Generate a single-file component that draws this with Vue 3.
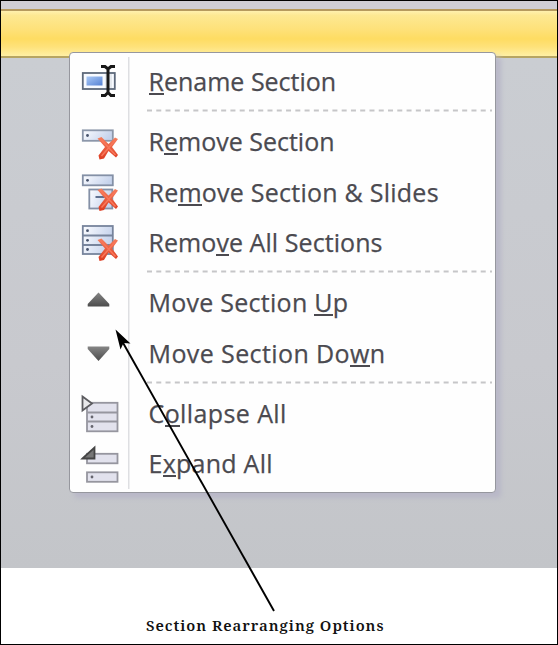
<script setup>
const groups = [
  [{ icon: 'rename', pre: '', key: 'R', post: 'ename Section', cls: 'w1' }],
  [
    { icon: 'remove', pre: 'R', key: 'e', post: 'move Section', cls: 'w2' },
    { icon: 'removeSlides', pre: 'Re', key: 'm', post: 'ove Section & Slides', cls: 'w3' },
    { icon: 'removeAll', pre: 'Remo', key: 'v', post: 'e All Sections', cls: 'w4' },
  ],
  [
    { icon: 'up', pre: 'Move Section ', key: 'U', post: 'p', cls: 'w5' },
    { icon: 'down', pre: 'Move Section Do', key: 'w', post: 'n', cls: 'w6' },
  ],
  [
    { icon: 'collapse', pre: 'C', key: 'o', post: 'llapse All', cls: 'w7' },
    { icon: 'expand', pre: 'E', key: 'x', post: 'pand All', cls: 'w8' },
  ],
]
</script>

<template>
  <div class="frame">
    <svg class="defs" width="0" height="0">
      <defs>
        <linearGradient id="bar" x1="0" y1="0" x2="1" y2="0.3">
          <stop offset="0" stop-color="#fbfcff" />
          <stop offset="1" stop-color="#c6d3ec" />
        </linearGradient>
        <linearGradient id="blue" x1="0" y1="0" x2="1" y2="1">
          <stop offset="0" stop-color="#a9c9f7" />
          <stop offset="1" stop-color="#5581d3" />
        </linearGradient>
        <linearGradient id="dark" x1="0" y1="0" x2="0" y2="1">
          <stop offset="0" stop-color="#858585" />
          <stop offset="1" stop-color="#4c4c4c" />
        </linearGradient>
        <linearGradient id="red" x1="0" y1="0" x2="0" y2="1">
          <stop offset="0" stop-color="#f4805f" />
          <stop offset="1" stop-color="#dd3a1f" />
        </linearGradient>
        <g id="cross">
          <path d="M0 1.500 4 0 11 7 17.500 .5 20.500 2 14.500 10 20.500 18 18.500 20.500 11 14 6.500 21.500 2 22.500 1 18.500 7.500 10Z" fill="url(#red)" />
          <path d="M3 2 18 18M18 3 4 19" stroke="#f8775b" stroke-width="1.500" fill="none" />
        </g>
      </defs>
    </svg>
    <div class="canvas">
      <div class="ribbon"></div>
      <div class="surface"></div>
    </div>
    <div class="caption">Section Rearranging Options</div>

    <div class="menu">
      <template v-for="(group, g) in groups" :key="g">
        <div v-if="g" class="separator">
          <svg width="346" height="3"><path d="M0 1.500H345" stroke="#c6c6c8" stroke-width="1.800" stroke-dasharray="5 4.270" /></svg>
        </div>
        <div v-for="item in group" :key="item.icon" class="item">
          <svg class="icon" width="60" height="50" viewBox="0 0 60 50">
            <g v-if="item.icon === 'rename'">
              <rect x="12.800" y="16" width="32" height="16" fill="#f7faff" stroke="#5d697b" stroke-width="1.800" />
              <rect x="16.500" y="19.500" width="16" height="9" fill="url(#blue)" />
              <rect x="35" y="17" width="7" height="14" fill="#e5e9ee" />
              <path d="M31 9.500h4l3 2.500 3-2.500H45M38 11V36M31 38.500h4l3-3 3 3H45" fill="none" stroke="#181818" stroke-width="3" />
            </g>
            <g v-else-if="item.icon === 'remove'">
              <rect x="12.800" y="13.300" width="30" height="10.500" fill="url(#bar)" stroke="#8c97aa" stroke-width="1.800" />
              <circle cx="17.500" cy="18.500" r="1.400" fill="#47536b" />
              <use href="#cross" x="27.500" y="20" />
            </g>
            <g v-else-if="item.icon === 'removeSlides'">
              <rect x="12.800" y="7.300" width="30" height="10" fill="url(#bar)" stroke="#8490a6" stroke-width="1.800" />
              <circle cx="17.500" cy="12.300" r="1.400" fill="#47536b" />
              <rect x="19.300" y="21.500" width="23" height="19" fill="url(#bar)" stroke="#8490a6" stroke-width="1.800" />
              <path d="M25.500 29h9" stroke="#5f7090" stroke-width="2" />
              <use href="#cross" x="27.500" y="20.500" />
            </g>
            <g v-else-if="item.icon === 'removeAll'">
              <rect x="12.800" y="8" width="30" height="28" fill="url(#bar)" stroke="#77849c" stroke-width="1.800" />
              <path d="M13 17.500h30M13 27h30" stroke="#77849c" stroke-width="1.800" />
              <g fill="#47536b"><circle cx="17.500" cy="12.700" r="1.400" /><circle cx="17.500" cy="22.300" r="1.400" /><circle cx="17.500" cy="31.500" r="1.400" /></g>
              <use href="#cross" x="27.500" y="20.500" />
            </g>
            <path v-else-if="item.icon === 'up'" d="M28.500 14.500 39.300 26v2.500H17.700V26Z" fill="url(#dark)" />
            <path v-else-if="item.icon === 'down'" d="M17.700 17.500h21.600V20L28.500 32 17.700 20Z" fill="url(#dark)" />
            <g v-else-if="item.icon === 'collapse'">
              <rect x="17" y="13.800" width="30.500" height="28.500" fill="#e2e2ed" stroke="#96969f" stroke-width="1.800" />
              <path d="M17.500 23.500h30M17.500 32.500h30" stroke="#96969f" stroke-width="1.800" />
              <g fill="#66666f"><circle cx="22" cy="28" r="1.400" /><circle cx="22" cy="37.500" r="1.400" /></g>
              <path d="M12.500 7.500 22 14.500 12.500 21.500Z" fill="#e9e9eb" stroke="#5c5c60" stroke-width="1.800" />
            </g>
            <g v-else>
              <rect x="17" y="14.800" width="30.500" height="9.500" fill="#e2e2ed" stroke="#96969f" stroke-width="1.800" />
              <path d="M12.500 19.500 24.500 8.500V19.500Z" fill="#777" stroke="#454545" stroke-width="1.800" />
              <rect x="17" y="33.300" width="30.500" height="9.500" fill="#e2e2ed" stroke="#96969f" stroke-width="1.800" />
              <circle cx="22" cy="38" r="1.400" fill="#66666f" />
            </g>
          </svg>
          <span class="label" :class="item.cls">{{ item.pre }}<span class="key">{{ item.key }}</span>{{ item.post }}</span>
        </div>
      </template>
    </div>

    <svg class="arrow" width="558" height="645" viewBox="0 0 558 645">
      <path d="M122 341 274 611" stroke="#000" stroke-width="1.900" />
      <path d="M115.500 329.500 130.500 343.500 123.500 343 120.500 349.500Z" fill="#000" />
    </svg>
  </div>
</template>

<style>
body { margin: 0; }
</style>

<style scoped>
.frame {
  position: relative;
  box-sizing: border-box;
  width: 558px;
  height: 645px;
  border: 1px solid #000;
  background: #fff;
  overflow: hidden;
}
.defs { position: absolute; }
.canvas {
  display: flex;
  flex-direction: column;
  height: 567px;
  padding-top: 8px;
  box-sizing: border-box;
  background: #cfced5;
}
.ribbon {
  height: 45px;
  border-top: 2px solid #b69a5e;
  border-bottom: 2px solid #b7a562;
  background: linear-gradient(#fff0ae 0, #fde892 10%, #fee17a 40%, #fedc62 62%, #fee27b 80%, #fff0a4 100%);
}
.surface {
  flex: 1;
  background: linear-gradient(#cacdd2, #c8c9ce 60%, #c3c5c9);
}
.caption {
  position: absolute;
  left: 145px;
  top: 614px;
  font: 600 15px/20px "Noto Serif", "DejaVu Serif", serif;
  letter-spacing: 0.960px;
  color: #111;
  white-space: nowrap;
}
.menu {
  position: absolute;
  left: 68px;
  top: 51px;
  width: 427px;
  height: 441px;
  box-sizing: border-box;
  padding-top: 3.800px;
  border: 1.500px solid #96979e;
  border-radius: 4px;
  background: linear-gradient(#dedfe2, #dedfe2) 58px 4px / 1.500px 432px no-repeat #fefefe;
  box-shadow: 5px 5px 5px #b9b8c8;
}
.item {
  display: flex;
  align-items: center;
  height: 50.400px;
}
.icon { flex: none; }
.separator {
  height: 9.800px;
  padding: 2px 0 0 76.500px;
  box-sizing: border-box;
}
.separator svg { display: block; }
.label {
  margin-left: 18.500px;
  padding-bottom: 2px;
  font: 25px/36px "Open Sans", "Noto Sans", sans-serif;
  color: #4b4a50;
  -webkit-text-stroke: 0.250px #4b4a50;
  white-space: nowrap;
}
.w3 { letter-spacing: 0.240px; }
.w4 { letter-spacing: 0.060px; }
.w5 { letter-spacing: 0.260px; }
.w6 { letter-spacing: 0.400px; }
.w7 { letter-spacing: 0.400px; }
.w8 { letter-spacing: 0.260px; }
.key {
  display: inline-block;
  height: 32px;
  line-height: 36px;
  border-bottom: 2px solid #4b4a50;
  box-sizing: border-box;
}
.arrow {
  position: absolute;
  left: -1px;
  top: -1px;
}
</style>
